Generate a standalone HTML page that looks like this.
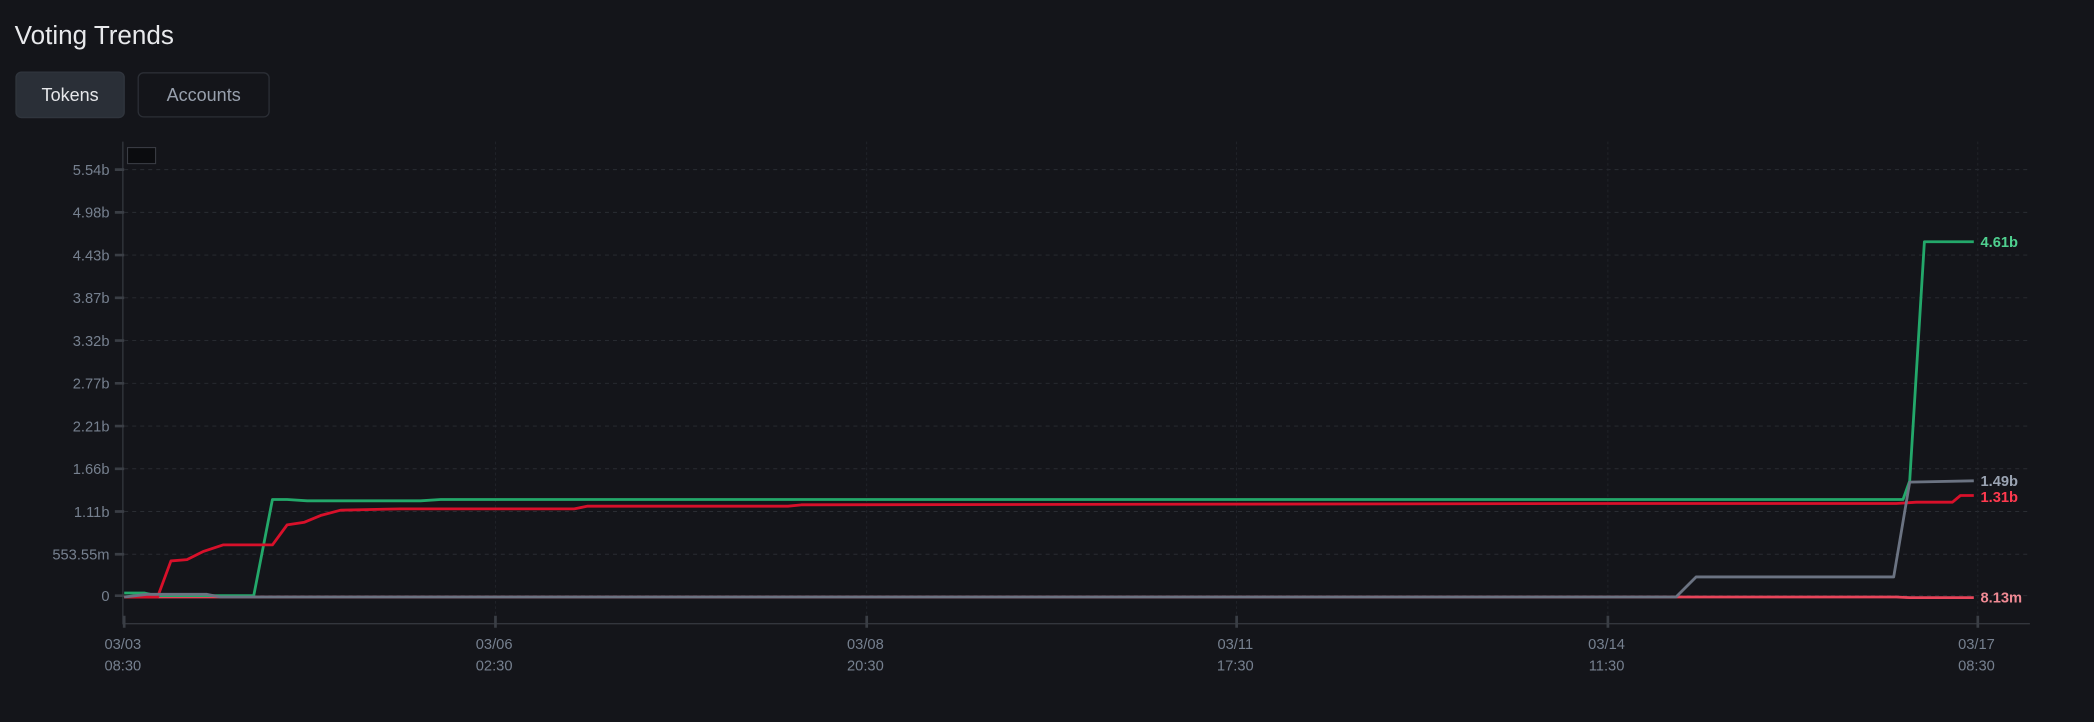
<!DOCTYPE html>
<html><head><meta charset="utf-8"><style>
html,body{margin:0;padding:0;background:#14151a;width:2094px;height:722px;overflow:hidden}
svg{display:block}
text{font-family:"Liberation Sans",sans-serif}
</style></head><body>
<svg width="2094" height="722" viewBox="0 0 1568 540.6" preserveAspectRatio="none">
<rect width="1568" height="541" fill="#14151a"/>
<text x="11" y="33" font-size="19.5" fill="#e8e9ec" font-weight="500">Voting Trends</text>
<rect x="12" y="54" width="81" height="34" rx="4" fill="#2a2f37" stroke="#30353d"/>
<text x="52.5" y="75.5" font-size="13.5" fill="#e6e7ea" text-anchor="middle">Tokens</text>
<rect x="103.5" y="54.5" width="98" height="33" rx="4" fill="none" stroke="#2b2e35"/>
<text x="152.5" y="75.5" font-size="13.5" fill="#98a0ad" text-anchor="middle">Accounts</text>
<g stroke="#2a2d33" stroke-width="0.7" stroke-dasharray="3 3" fill="none">
<path d="M93 127H1520M93 159H1520M93 191H1520M93 223H1520M93 255H1520M93 287H1520M93 319H1520M93 351H1520M93 383H1520M93 415H1520M93 446H1520"/>
</g>
<g stroke="#24272d" stroke-width="0.6" stroke-dasharray="2 2" fill="none">
<path d="M371 106V467M649 106V467M926 106V467M1204 106V467M1481 106V467"/>
</g>
<path d="M92 106V467H1520" stroke="#33363d" stroke-width="1" fill="none"/>
<g stroke="#3a3e45" stroke-width="2">
<path d="M86 127H93M86 159H93M86 191H93M86 223H93M86 255H93M86 287H93M86 319H93M86 351H93M86 383H93M86 415H93M86 446H93"/>
<path d="M93 461V470M371 461V470M649 461V470M926 461V470M1204 461V470M1481 461V470"/>
</g>
<g font-size="11" fill="#76808f" text-anchor="end">
<text x="82" y="131">5.54b</text><text x="82" y="163">4.98b</text><text x="82" y="195">4.43b</text><text x="82" y="227">3.87b</text><text x="82" y="259">3.32b</text><text x="82" y="291">2.77b</text><text x="82" y="323">2.21b</text><text x="82" y="355">1.66b</text><text x="82" y="387">1.11b</text><text x="82" y="419">553.55m</text><text x="82" y="450">0</text>
</g>
<g font-size="11" fill="#76808f" text-anchor="middle">
<text x="92" y="486">03/03</text><text x="92" y="502">08:30</text>
<text x="370" y="486">03/06</text><text x="370" y="502">02:30</text>
<text x="648" y="486">03/08</text><text x="648" y="502">20:30</text>
<text x="925" y="486">03/11</text><text x="925" y="502">17:30</text>
<text x="1203" y="486">03/14</text><text x="1203" y="502">11:30</text>
<text x="1480" y="486">03/17</text><text x="1480" y="502">08:30</text>
</g>
<rect x="95.5" y="110.5" width="21" height="12" fill="#0b0c0f" stroke="#3a3d44" stroke-width="0.8"/>
<g fill="none" stroke-width="2.1" stroke-linejoin="round">
<path stroke="#e8455a" d="M93 447L160 447L1420 447L1430 447.5L1478 447.5"/>
<path stroke="#23a86a" d="M93 444L108 444L117 446L190 446L204 374L215 374L230 375L315 375L330 374L1425 374L1430 360L1441 181L1478 181"/>
<path stroke="#d8102a" d="M93 447L118 447L128 420L140 419L152 413L167 408L204 408L215 393L228 391L240 386L255 382L300 381L430 381L440 379L590 379L600 378L1210 377L1420 377L1435 376L1462 376L1468 371L1478 371"/>
<path stroke="#6b7382" d="M93 447L110 445L155 445L165 447L1255 447L1270 432L1418 432L1430 361L1478 360"/>
</g>
<g font-size="11" font-weight="bold">
<text x="1483" y="185" fill="#4fd08f">4.61b</text>
<text x="1483" y="364" fill="#9aa3b2">1.49b</text>
<text x="1483" y="376" fill="#ff3a4f">1.31b</text>
<text x="1483" y="451" fill="#f08a94">8.13m</text>
</g>
</svg>
</body></html>
